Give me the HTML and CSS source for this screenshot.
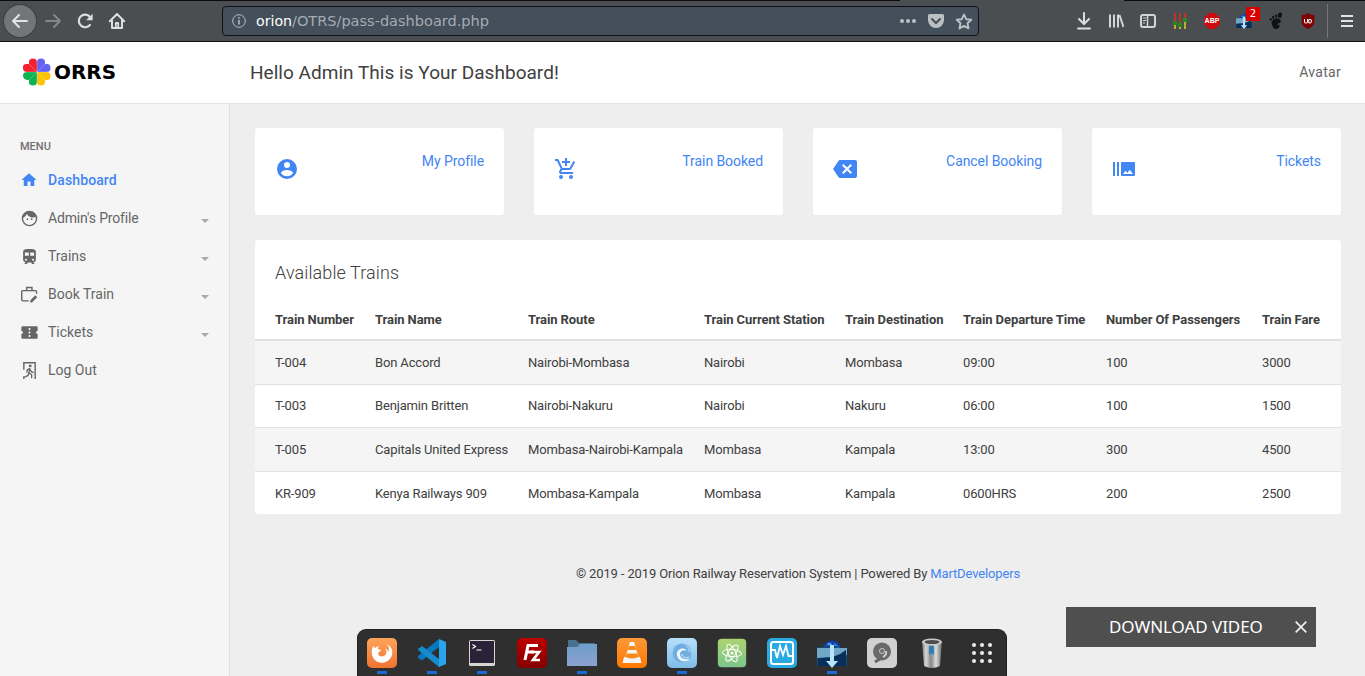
FILE: index.html
```html
<!DOCTYPE html>
<html lang="en">
<head>
<meta charset="utf-8">
<title>ORRS Dashboard</title>
<link rel="stylesheet" href="styles.css">
</head>
<body>
<div class="browser-bar">
  <div class="nav-buttons">
    <span class="back"><svg width="20" height="20" viewBox="0 0 20 20" fill="none" stroke="#e2e3e3" stroke-width="2" stroke-linecap="round" stroke-linejoin="round"><path d="M17 10H3M9 4l-6 6 6 6"/></svg></span>
    <svg width="20" height="20" viewBox="0 0 20 20" fill="none" stroke="#838789" stroke-width="2" stroke-linecap="round" stroke-linejoin="round"><path d="M4 10h14M12 4l6 6-6 6"/></svg>
    <svg width="18" height="18" viewBox="0 0 18 18"><path d="M14.500 12.200A6.300 6.300 0 1 1 14 5" fill="none" stroke="#dddede" stroke-width="2.200"/><path d="M16.600 1.700v6.500h-6.500z" fill="#dddede"/></svg>
    <svg width="18" height="18" viewBox="0 0 18 18" fill="none" stroke="#dddede" stroke-width="2" stroke-linejoin="round" stroke-linecap="round"><path d="M1.800 9.200 9 2l7.200 7.200M4 8.500V16h10V8.500"/><path d="M7.800 15v-4h2.400v4" stroke-width="1.800"/></svg>
  </div>
  <div class="address">
    <svg width="14" height="14" viewBox="0 0 14 14" fill="none" stroke="#b5bbc0"><circle cx="7" cy="7" r="6.300"/><path d="M7 6v4.500M7 3.200v1.500" stroke-width="1.600"/></svg>
    <svg class="url" width="236" height="20"><text x="0" y="15" textLength="36" lengthAdjust="spacingAndGlyphs" class="host">orion</text><text x="36" y="15" textLength="197" lengthAdjust="spacingAndGlyphs" class="path">/OTRS/pass-dashboard.php</text></svg>
    <div class="address-actions">
      <svg width="18" height="6" viewBox="0 0 18 6" fill="#bbc0c3"><circle cx="3" cy="3" r="2"/><circle cx="9" cy="3" r="2"/><circle cx="15" cy="3" r="2"/></svg>
      <svg width="16" height="15" viewBox="0 0 16 15"><path d="M1.500 0h13A1.500 1.500 0 0 1 16 1.500V6A8 8 0 0 1 0 6V1.500A1.500 1.500 0 0 1 1.500 0z" fill="#bbc0c3"/><path d="m4 5 4 4 4-4" fill="none" stroke="#434f5b" stroke-width="2" stroke-linecap="round"/></svg>
      <svg width="18" height="17" viewBox="0 0 18 17"><path d="m9 1.500 2.200 4.700 5.100.6-3.800 3.500 1 5.100L9 12.900l-4.500 2.500 1-5.100L1.700 6.800l5.100-.6z" fill="none" stroke="#bbc0c3" stroke-width="1.900" stroke-linejoin="round"/></svg>
    </div>
  </div>
  <div class="extensions">
    <svg width="16" height="18" viewBox="0 0 16 18" fill="none" stroke="#dddede" stroke-width="2"><path d="M8 1v11M3 7l5 5 5-5M2 16.500h12" stroke-linecap="round"/></svg>
    <svg width="16" height="18" viewBox="0 0 16 18" fill="none" stroke="#d2d4d5" stroke-width="2"><path d="M2 2.500v13M6 2.500v13M10 2.500v13" /><path d="m11.500 3 4 12"/></svg>
    <svg width="16" height="18" viewBox="0 0 16 18" fill="none" stroke="#d2d4d5"><rect x="1" y="3" width="14" height="12" rx="2" stroke-width="2"/><path d="M7.500 3v12" stroke-width="1.500"/><path d="M3 6h3M3 8.500h3M3 11h2"/></svg>
    <svg width="16" height="18" viewBox="0 0 16 18"><path d="M3 1v8M8 1v10M13 1v5" stroke="#e52a20" stroke-width="1.500"/><path d="M3 13v4M8 15v2M13 10v7" stroke="#e1cf28" stroke-width="1.500"/><path d="M1 9h4v4H1zM6 11h4v4H6zM11 6h4v4h-4z" fill="#268c18"/></svg>
    <span class="abp">ABP</span>
    <div class="downloader"><svg width="16" height="18" viewBox="0 0 30 30"><use href="#download-tray"/></svg><b>2</b></div>
    <svg width="16" height="18" viewBox="0 0 16 18" fill="#111"><ellipse cx="12" cy="3.200" rx="2" ry="2.700" transform="rotate(15 12 3)"/><ellipse cx="8.200" cy="4" rx="1.200" ry="1.800"/><ellipse cx="5.200" cy="5.300" rx="1.100" ry="1.600"/><ellipse cx="2.700" cy="7.400" rx="1" ry="1.400"/><path d="M10 6.500c4.500 1 3 5 0 5-1.500 0-1 1.500.3 1.200 1.200-.3 2 .8 1 2.300-2 3-5.500 2.500-6.500 0C4 12 3 11 4 9c1.500-2 4-3 6-2.500z"/></svg>
    <svg width="16" height="18" viewBox="0 0 16 18"><path d="M8 1c2 1.500 4 2 6.500 2v6c0 4-2.500 6-6.500 8-4-2-6.500-4-6.500-8V3C4 3 6 2.500 8 1z" fill="#7f0505"/><path d="M4.500 7v3q0 1 1 1h1q1 0 1-1V7" fill="none" stroke="#fff"/><path d="M8.800 7.500H10q1.700 0 1.700 1.700T10 11H8.800z" fill="none" stroke="#fff"/></svg>
  </div>
  <div class="menu-button"><svg width="12" height="12" viewBox="0 0 12 12" fill="#e1e2e2"><path d="M0 0h12v2H0zM0 5h12v2H0zM0 10h12v2H0z"/></svg></div>
</div>

<header class="top">
  <div class="logo">
    <svg width="94" height="28" viewBox="0 0 94 28">
      <path d="M14 14H4a4 4 0 0 1-4-4V9q0-3 3.500-3H6V4Q6 .5 10 .5q4 0 4 3.500z" fill="#f6202e"/>
      <path d="M14 14V4q0-3.500 4-3.500T22 4v2h2q3.500 0 3.500 4T24 14z" fill="#6463f4"/>
      <path d="M14 14H4q-4 0-4 3.500T4 22h2v2q0 3.500 4 3.500t4-3.500z" fill="#0cb454"/>
      <path d="M14 14h10q3.500 0 3.500 4T24 22h-2v2q0 3.500-4 3.500T14 24z" fill="#fcc306"/>
      <path d="m6 6 16 16M22 6 6 22M14 1v26M0 14h27.500" stroke="#fff" stroke-opacity=".5" stroke-width=".5"/>
      <text x="31" y="20.500" textLength="62" lengthAdjust="spacingAndGlyphs" class="brand">ORRS</text>
    </svg>
  </div>
  <h1>Hello Admin This is Your Dashboard!</h1>
  <span class="avatar">Avatar</span>
</header>

<div class="layout">
  <nav class="sidebar">
    <div class="menu-title">MENU</div>
    <a class="item active"><svg viewBox="0 0 24 24"><path d="M10 20v-6h4v6h5v-8h3L12 3 2 12h3v8z"/></svg>Dashboard</a>
    <a class="item profile"><svg viewBox="0 0 24 24"><path d="M9 11.750a1.250 1.250 0 1 0 0 2.500 1.250 1.250 0 0 0 0-2.500zm6 0a1.250 1.250 0 1 0 0 2.500 1.250 1.250 0 0 0 0-2.500zM12 1a11 11 0 1 0 0 22 11 11 0 0 0 0-22zm0 20a9 9 0 0 1-9-9c0-.3 0-.6.050-.86a10 10 0 0 0 5.200-5.370A9.960 9.960 0 0 0 20.700 9.700 9 9 0 0 1 12 21z"/></svg>Admin's Profile<i class="caret"></i></a>
    <a class="item"><svg viewBox="0 0 24 24"><path d="M12 1.500c-5 0-9 .5-9 4v11A3.500 3.500 0 0 0 6.500 20L5 22v.5h3l2-2h4l2 2h3V22l-1.500-2a3.500 3.500 0 0 0 3.500-3.500v-11c0-3.500-4-4-9-4zM7 18a1.500 1.500 0 1 1 0-3 1.500 1.500 0 0 1 0 3zM11 11H5.500V6.500H11zm2 0V6.500h5.500V11zm4 7a1.500 1.500 0 1 1 0-3 1.500 1.500 0 0 1 0 3z"/></svg>Trains<i class="caret"></i></a>
    <a class="item"><svg viewBox="0 0 24 24" class="outline"><path d="M11 21H2.500A1.500 1.500 0 0 1 1 19.500V8a1.500 1.500 0 0 1 1.500-1.500h18A1.500 1.500 0 0 1 22 8v3M8 6.500V2h7.500v4.500"/><path d="m14 21 7-7M13 22h2l7-7" stroke-width="2.300"/></svg>Book Train<i class="caret"></i></a>
    <a class="item"><svg viewBox="0 0 24 24"><path d="M22 10V5a1.500 1.500 0 0 0-1.500-1.500h-17A1.500 1.500 0 0 0 2 5v5a2 2 0 0 1 0 4v5a1.500 1.500 0 0 0 1.500 1.500h17A1.500 1.500 0 0 0 22 19v-5a2 2 0 0 1 0-4zm-9 8h-2v-2.500h2zm0-4.800h-2v-2.400h2zm0-4.700h-2V6h2z" transform="matrix(1.150 0 0 1.050 -1.800 -.6)"/></svg>Tickets<i class="caret"></i></a>
    <a class="item"><svg viewBox="0 0 24 24"><path d="M3 0h18v24h-2V2H5v9H3zM3 20h3v2H5v2H3z"/><circle cx="13" cy="5.500" r="2"/><path d="m13 9-4 2-1 4m5-6-2 6 4 3v5m-4-8-1 4-4 2m7-10 2 3 3 1" fill="none" stroke="#666" stroke-width="1.900"/></svg>Log Out</a>
  </nav>
  <main>
    <div class="cards">
      <div class="card"><svg viewBox="0 0 24 24"><path d="M12 2a10 10 0 1 0 0 20 10 10 0 0 0 0-20zm0 3a3 3 0 1 1 0 6 3 3 0 0 1 0-6zm0 14.200a7.200 7.200 0 0 1-6-3.220c.03-2 4-3.080 6-3.080s5.970 1.090 6 3.080a7.200 7.200 0 0 1-6 3.220z"/></svg><a>My Profile</a></div>
      <div class="card"><svg viewBox="0 0 24 24"><path d="M11 9h2V6h3V4h-3V1h-2v3H8v2h3zm-4 9a2 2 0 1 0 0 4 2 2 0 0 0 0-4zm10 0a2 2 0 1 0 0 4 2 2 0 0 0 0-4zm-9.830-3.250.03-.12.900-1.630h7.450c.75 0 1.410-.410 1.750-1.030l3.860-7.010L19.420 4l-1.100 2-2.760 5H8.530L4.270 2H1v2h2l3.600 7.590-1.350 2.450C4.520 15.370 5.480 17 7 17h12v-2H7.420c-.13 0-.25-.110-.25-.25z"/></svg><a>Train Booked</a></div>
      <div class="card"><svg viewBox="0 0 24 24"><path d="M22 3H7c-.7 0-1.230.350-1.590.880L0 12l5.410 8.110c.36.530.9.890 1.590.890h15a2 2 0 0 0 2-2V5a2 2 0 0 0-2-2zm-3 12.590L17.590 17 14 13.410 10.410 17 9 15.590 12.590 12 9 8.410 10.410 7 14 10.590 17.590 7 19 8.410 15.410 12z"/></svg><a>Cancel Booking</a></div>
      <div class="card"><svg viewBox="0 0 24 24"><path d="M1 5h2v14H1zm4 0h2v14H5zm17 0H10a1 1 0 0 0-1 1v12a1 1 0 0 0 1 1h12a1 1 0 0 0 1-1V6a1 1 0 0 0-1-1zM11 17l2.500-3.150L15.290 16l2.500-3.220L21 17z"/></svg><a>Tickets</a></div>
    </div>
    <section class="panel">
      <h2>Available Trains</h2>
      <table>
        <colgroup><col class="c1"><col class="c2"><col class="c3"><col class="c4"><col class="c5"><col class="c6"><col class="c7"><col class="c8"></colgroup>
        <thead><tr><th>Train Number</th><th>Train Name</th><th>Train Route</th><th>Train Current Station</th><th>Train Destination</th><th>Train Departure Time</th><th>Number Of Passengers</th><th>Train Fare</th></tr></thead>
        <tbody>
          <tr><td>T-004</td><td>Bon Accord</td><td>Nairobi-Mombasa</td><td>Nairobi</td><td>Mombasa</td><td>09:00</td><td>100</td><td>3000</td></tr>
          <tr class="short"><td>T-003</td><td>Benjamin Britten</td><td>Nairobi-Nakuru</td><td>Nairobi</td><td>Nakuru</td><td>06:00</td><td>100</td><td>1500</td></tr>
          <tr class="tall"><td>T-005</td><td>Capitals United Express</td><td>Mombasa-Nairobi-Kampala</td><td>Mombasa</td><td>Kampala</td><td>13:00</td><td>300</td><td>4500</td></tr>
          <tr><td>KR-909</td><td>Kenya Railways 909</td><td>Mombasa-Kampala</td><td>Mombasa</td><td>Kampala</td><td>0600HRS</td><td>200</td><td>2500</td></tr>
        </tbody>
      </table>
    </section>
    <footer>© 2019 - 2019 Orion Railway Reservation System | Powered By <a>MartDevelopers</a></footer>
  </main>
</div>

<div class="download-video"><span>DOWNLOAD VIDEO</span><svg width="12" height="12" viewBox="0 0 12 12" stroke="#f0f0f0" stroke-width="1.700"><path d="m.7.7 10.600 10.600M11.300.7.7 11.300"/></svg></div>

<div class="dock">
  <div class="app running"><svg viewBox="0 0 30 30"><rect width="30" height="30" rx="5" fill="url(#g-orange)"/><path d="M6 8l2 2c1-1 3-2 5-2-2 1-2.500 2-2 3l3 1c-1 2-3 2-3 4 1 3 6 3.500 8 0 1-2 .5-4-1-5.500 2 .5 3 2 3.200 3.500C23 10 21.500 7.500 19 6c5 1.500 7 6 6 11-2 7-10 10-16 6-5-4-5-10-3-15z" fill="#fff"/></svg></div>
  <div class="app running"><svg viewBox="0 0 30 30"><path d="M22 1v8L5 22.500 1 20v-2z" fill="#0879bd"/><path d="m1 11 4-3L22 21v8L1 12z" fill="#168bcd"/><path d="m22 1 7 3v22l-7 3z" fill="#29a5ef"/></svg></div>
  <div class="app running"><svg viewBox="0 0 30 30"><rect x="2" y="2" width="26" height="26" rx="1.500" fill="#d6d5d0"/><rect x="3" y="3" width="24" height="22" fill="#292238"/><path d="m5.500 6.500 3 2-3 2M9.500 12h5" fill="none" stroke="#fff" stroke-width="1.200"/></svg></div>
  <div class="app"><svg viewBox="0 0 30 30"><rect width="30" height="30" rx="5" fill="url(#g-red)"/><path d="M8 22 11 7.500h10M9.500 14H17" fill="none" stroke="#fff" stroke-width="3"/><path d="M14 14h8l-6 8h7" fill="none" stroke="#fff" stroke-width="2.700"/></svg></div>
  <div class="app running"><svg viewBox="0 0 30 30"><path d="M1 2h8l3 3h16v8H1z" fill="#47718f"/><path d="M0 9h10l3-3h17v22H0z" fill="url(#g-folder)"/></svg></div>
  <div class="app"><svg viewBox="0 0 30 30"><rect width="30" height="30" rx="5" fill="url(#g-vlc)"/><path d="M13 4h4l4.500 15H23l1.500 6h-19L7 19h1.500z" fill="#f5f5f5"/><path d="m12 8-1.300 4h8.600L18 8zM9.700 15.500 8.500 19q6.500 3 13 0l-1.200-3.500z" fill="#f58a18"/></svg></div>
  <div class="app running"><svg viewBox="0 0 30 30"><rect width="30" height="30" rx="5" fill="url(#g-sky)"/><circle cx="15" cy="15" r="9.500" fill="#71aee0"/><path d="M24 15c0-5-4-9-8.500-9 4 1.500 6 4 6 8z" fill="#9bcaf0"/><path d="M20 13c-3-5-11-2-10 4 1 7 9 8 13 4-4 1-10 0-10-5 0-3 4-5 7-3z" fill="#eef7ff"/><path d="M15 16c0 3 4 5 7 3" fill="none" stroke="#e0f1ff"/></svg></div>
  <div class="app"><svg viewBox="0 0 30 30"><rect x=".8" y=".8" width="28.400" height="28.400" rx="4" fill="url(#g-green)"/><g fill="none" stroke="#fff" stroke-width="1"><ellipse cx="15" cy="15" rx="9.500" ry="3.600" transform="rotate(5 15 15)"/><ellipse cx="15" cy="15" rx="9.500" ry="3.600" transform="rotate(65 15 15)"/><ellipse cx="15" cy="15" rx="9.500" ry="3.600" transform="rotate(125 15 15)"/></g><circle cx="15" cy="15" r="1.500" fill="#fff"/></svg></div>
  <div class="app"><svg viewBox="0 0 30 30"><rect width="30" height="30" rx="5" fill="#29abe2"/><rect x="4" y="4" width="22" height="22" rx="2.500" fill="none" stroke="#fff" stroke-width="2"/><path d="M5 12h3l2 8 3-12 3 9 3-9 2.500 10H26" fill="none" stroke="#fff" stroke-width="1.800"/></svg></div>
  <div class="app running"><svg viewBox="0 0 30 30"><g id="download-tray"><circle cx="15" cy="11" r="8.500" fill="#123fab"/><path d="M10 6c3-3 6 0 5 3l-4 2zM17 5l5 4-3 3z" fill="#489ce9"/><path d="M2 6h6l2 3H0v19h30V11H20l1-2h7" fill="#124d78"/><path d="M0 10h30v7q-15 3-30 3z" fill="#70a8ca"/><path d="M1 20q17 1 28-8v16H1z" fill="#082f59"/><path d="M13 7h4v16h4l-6 7-6-7h4z" fill="#b9e2fb"/></g></svg></div>
  <div class="app"><svg viewBox="0 0 30 30"><rect width="30" height="30" rx="5" fill="#d1d1d1"/><circle cx="15" cy="13.500" r="9" fill="#696969"/><circle cx="15" cy="13" r="2.500" fill="none" stroke="#ccc"/><path d="m9 23 7-4q4-2 3-6" fill="none" stroke="#ccc" stroke-width="2"/><path d="m8 24 8-5" stroke="#666" stroke-width="3"/></svg></div>
  <div class="app"><svg viewBox="0 0 30 30"><path d="m5 3 2 25q8 4 16 0l2-25z" fill="url(#g-metal)"/><ellipse cx="15" cy="4" rx="10" ry="3.500" fill="#ccc"/><ellipse cx="15" cy="4" rx="7.500" ry="2" fill="#4c4c4c"/><path d="M12 8h5v9l-2.500-2L12 17z" fill="#2e7fb2"/></svg></div>
  <div class="app"><svg viewBox="0 0 30 30" fill="#eee"><circle cx="7" cy="7" r="2"/><circle cx="15" cy="7" r="2"/><circle cx="23" cy="7" r="2"/><circle cx="7" cy="15" r="2"/><circle cx="15" cy="15" r="2"/><circle cx="23" cy="15" r="2"/><circle cx="7" cy="23" r="2"/><circle cx="15" cy="23" r="2"/><circle cx="23" cy="23" r="2"/></svg></div>
  <svg class="defs" width="0" height="0"><defs>
    <linearGradient id="g-orange" x2="0" y2="1"><stop stop-color="#ffa45a"/><stop offset="1" stop-color="#ef7431"/></linearGradient>
    <linearGradient id="g-red" x2="0" y2="1"><stop stop-color="#bd0000"/><stop offset="1" stop-color="#850000"/></linearGradient>
    <linearGradient id="g-folder" x2="0" y2="1"><stop stop-color="#6f9dca"/><stop offset="1" stop-color="#8ca2cf"/></linearGradient>
    <linearGradient id="g-vlc" x2="0" y2="1"><stop stop-color="#fb9838"/><stop offset="1" stop-color="#ff7800"/></linearGradient>
    <linearGradient id="g-sky" x2="0" y2="1"><stop stop-color="#b6e0fb"/><stop offset="1" stop-color="#7fbce8"/></linearGradient>
    <linearGradient id="g-green" x2="0" y2="1"><stop stop-color="#acd46f"/><stop offset="1" stop-color="#7cc58b"/></linearGradient>
    <linearGradient id="g-metal"><stop stop-color="#777"/><stop offset=".2" stop-color="#d9d9d9"/><stop offset=".45" stop-color="#858585"/><stop offset=".7" stop-color="#ddd"/><stop offset="1" stop-color="#666"/></linearGradient>
  </defs></svg>
</div>
</body>
</html>
```
FILE: styles.css
```css
* { box-sizing: border-box; }
body { margin: 0; height: 676px; overflow: hidden; background: #eee; color: #404040; font: 13px Roboto, sans-serif; }
svg { display: block; flex: none; }

.browser-bar { height: 42px; padding-top: 1px; display: flex; align-items: center; background: linear-gradient(#0b0c0d, #0b0c0d) 0 0 / 900px 1px no-repeat, linear-gradient(#0b0c0d, #0b0c0d) 100% 0 / 241px 1px no-repeat, #4a4e51; border-bottom: 1px solid #111; }
.nav-buttons { width: 222px; padding-left: 4px; display: flex; align-items: center; gap: 14px; }
.nav-buttons .back { width: 32px; height: 32px; margin-right: -8px; display: flex; align-items: center; justify-content: center; border-radius: 50%; background: #737678; box-shadow: 0 0 0 1px #3b3e40; }
.address { width: 757px; height: 30px; display: flex; align-items: center; padding: 0 5px 0 9px; border: 1px solid #101214; border-radius: 4px; background: #434f5b; }
.url { margin-left: 10px; font: 14px "DejaVu Sans", sans-serif; }
.host { fill: #fff; }
.path { fill: #a5abb1; }
.address-actions { display: flex; align-items: center; gap: 11px; margin-left: auto; }
.extensions { display: flex; gap: 16px; margin-left: 97px; align-items: center; }
.abp { width: 16px; height: 16px; background: #c70d0d; color: #fff; font: bold 7px/16px "Liberation Sans", sans-serif; text-align: center; clip-path: polygon(30% 0, 70% 0, 100% 30%, 100% 70%, 70% 100%, 30% 100%, 0 70%, 0 30%); }
.downloader { position: relative; }
.downloader b { position: absolute; left: 10px; top: -5px; width: 14px; height: 14px; background: #d90000; color: #fff; font: 10px/14px "DejaVu Sans", sans-serif; text-align: center; }
.menu-button { height: 34px; margin-left: 11px; padding-left: 13px; border-left: 1px solid #747779; display: flex; align-items: center; }

.top { height: 62px; display: flex; align-items: center; background: #fff; border-bottom: 1px solid #e3e3e3; }
.logo { width: 250px; padding: 0 0 2px 23px; }
.brand { font: bold 19px "DejaVu Sans", sans-serif; fill: #000; }
h1 { margin: 0; font-size: 19px; line-height: 24px; font-weight: 400; letter-spacing: .03px; color: #404040; }
.avatar { margin: 0 24px 2px auto; font-size: 14px; letter-spacing: .3px; color: #666; }

.layout { height: 572px; display: flex; }
.sidebar { width: 230px; padding-top: 33px; border-right: 1px solid #e0e0e0; background: #f5f5f5; }
.menu-title { height: 24px; padding-left: 20px; font-size: 11px; line-height: 19px; font-weight: 500; color: #707070; }
.item { height: 38px; padding: 0 20px 0 21px; display: flex; align-items: center; color: #666; font-size: 14px; }
.item svg { width: 17px; height: 17px; margin-right: 10px; fill: currentColor; }
.item .outline { fill: none; stroke: currentColor; stroke-width: 2; }
.profile { letter-spacing: -.15px; }
.active { color: #4285f4; font-weight: 500; letter-spacing: .12px; }
.active svg { width: 18px; height: 18px; margin: 0 10px 0 -1px; }
.caret { margin: 6px .5px 0 auto; border: 4.5px solid transparent; border-top-color: #aaa; border-bottom: 0; }

main { flex: 1; padding: 24px 24px 0 25px; }
.cards { display: grid; grid-template-columns: repeat(4, 249px); gap: 30px; margin-bottom: 25px; }
.card { height: 87px; padding: 24px 20px; display: flex; justify-content: space-between; background: #fff; border-radius: 3px; color: #4285f4; font-size: 14px; }
.card svg { width: 24px; height: 24px; margin-top: 5px; fill: currentColor; }
.card a { line-height: 18px; letter-spacing: -.07px; }
.panel { height: 274px; border-radius: 3px; background: #fff; overflow: hidden; }
h2 { margin: 0; height: 60px; padding: 21px 20px 0; font-size: 18px; line-height: 24px; font-weight: 300; letter-spacing: .1px; }
table { width: 1086px; table-layout: fixed; border-collapse: separate; border-spacing: 0; }
.c1 { width: 110px; }
.c2 { width: 153px; }
.c3 { width: 176px; }
.c4 { width: 141px; }
.c5 { width: 118px; }
.c6 { width: 143px; }
.c7 { width: 156px; }
.c8 { width: 89px; }
th, td { padding: 0 0 0 10px; text-align: left; white-space: nowrap; letter-spacing: -.15px; }
th:first-child, td:first-child { padding-left: 20px; }
th { height: 41px; border-bottom: 2px solid #dee2e6; font-weight: 700; letter-spacing: -.08px; }
td { height: 43px; border-top: 1px solid #dee2e6; }
tbody tr:first-child td { border-top: 0; }
.short td { padding-bottom: 2px; }
.tall td { height: 44px; }
tbody tr:nth-child(odd) { background: #f5f5f5; }
footer { margin-top: 51px; text-align: center; line-height: 18px; letter-spacing: -.14px; }
footer a { color: #4285f4; }

.download-video { position: absolute; left: 1066px; top: 607px; width: 250px; height: 40px; padding: 0 9px 0 43px; display: flex; align-items: center; justify-content: space-between; background: #4f4f4f; color: #fff; font: 17px "Noto Sans", sans-serif; letter-spacing: -.05px; }
.download-video span { padding-bottom: 2px; }
.dock { position: absolute; left: 357px; bottom: 0; width: 650px; height: 47px; padding-top: 9px; display: flex; background: #2f2f2f; border: 1px solid #202020; border-bottom: 0; border-radius: 9px 9px 0 0; }
.app { width: 50px; display: flex; flex-direction: column; align-items: center; flex: none; }
.app:first-child { margin-left: -1px; }
.app svg { width: 30px; height: 30px; margin-top: -1px; }
.running::after { content: ""; width: 10px; height: 3px; margin-top: 3px; background: #1c6ad4; }
.defs { position: absolute; }
```
